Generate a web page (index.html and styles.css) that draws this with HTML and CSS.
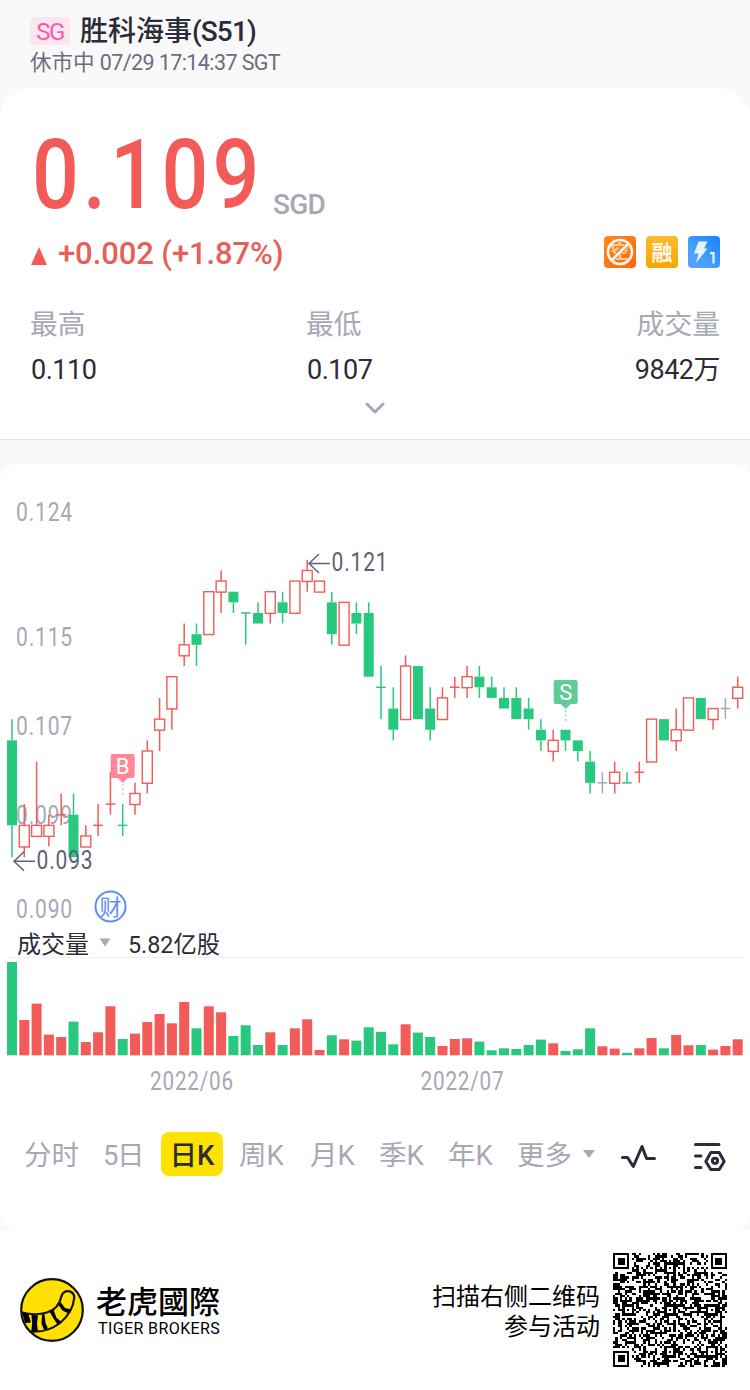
FILE: index.html
```html
<!DOCTYPE html>
<html lang="zh-CN">
<head>
	<meta charset="utf-8">
	<title>胜科海事(S51)</title>
	<link rel="stylesheet" href="styles.css">
</head>
<body>
	<header class="header">
		<div class="title"><span class="market">SG</span><h1>胜科海事<span>(S51)</span></h1></div>
		<p class="status">休市中 <span>07/29 17:14:37 SGT</span></p>
	</header>

	<section class="card quote">
		<div class="price"><strong>0.109</strong><span>SGD</span></div>
		<div class="change">
			<i class="up"></i>
			<span class="diff">+0.002 (+1.87%)</span>
			<div class="tags">
				<svg class="tag" viewBox="0 0 32 32">
					<defs>
						<linearGradient id="g1" x1="0" y1="0" x2="1" y2="1"><stop offset="0" stop-color="#ff8a1c"/><stop offset="1" stop-color="#ff6410"/></linearGradient>
						<linearGradient id="g2" x1="0" y1="0" x2="0" y2="1"><stop offset="0" stop-color="#fdbb30"/><stop offset="1" stop-color="#f7a500"/></linearGradient>
						<linearGradient id="g3" x1="0" y1="1" x2="1" y2="0"><stop offset="0" stop-color="#6b98ff"/><stop offset=".35" stop-color="#45a2fc"/><stop offset="1" stop-color="#1d80ff"/></linearGradient>
					</defs>
					<rect width="32" height="32" rx="4" fill="url(#g1)"/>
					<text x="16" y="23" class="tag-text" font-size="19" opacity=".65">空</text>
					<path d="M7.5 24.5L24.5 7.5" stroke="#ff7615" stroke-width="4"/>
					<circle cx="16" cy="16" r="12" fill="none" stroke="#fff8ed" stroke-width="2.6"/>
					<path d="M8 24L24 8" stroke="#fff8ed" stroke-width="2.6"/>
				</svg>
				<svg class="tag" viewBox="0 0 32 32">
					<rect width="32" height="32" rx="4" fill="url(#g2)"/>
					<text x="16" y="23.7" class="tag-text" font-size="21">融</text>
				</svg>
				<svg class="tag" viewBox="0 0 32 32">
					<rect width="32" height="32" rx="4" fill="url(#g3)"/>
					<path d="M10.5 5.5h9l-3.500 7h3.500L8 27l2.500-9.500H6z" fill="#e5f5ff"/>
					<path d="M22 17.200h3.500V27.500" fill="none" stroke="#e5f5ff" stroke-width="2.200"/>
				</svg>
			</div>
		</div>
		<ul class="stats">
			<li><label>最高</label><b>0.110</b></li>
			<li><label>最低</label><b>0.107</b></li>
			<li><label>成交量</label><b>9842万</b></li>
		</ul>
		<svg class="more" viewBox="0 0 20 12"><path d="M2 2l8 8 8-8"/></svg>
	</section>

	<section class="card kline">
		<svg id="chart" viewBox="0 464 750 640"></svg>
		<ul class="tabs">
			<li>分时</li>
			<li class="day5">5日</li>
			<li class="current">日K</li>
			<li>周K</li>
			<li>月K</li>
			<li>季K</li>
			<li>年K</li>
			<li>更多<i class="caret"></i></li>
			<li><svg class="icon" viewBox="0 0 36 32"><path d="M1.500 17.500h5l5.800 9L21 6.500l4.600 12H33.500"/></svg></li>
			<li><svg class="icon" viewBox="0 0 36 32"><path d="M2.500 4.500H26M2.500 16H8M2.500 27.500H8M17.800 12.500h8.400l5 9-5 8h-8.400l-5-8z"/><circle cx="22" cy="20.800" r="2.600"/></svg></li>
		</ul>
	</section>

	<footer class="footer">
		<svg class="logo" viewBox="0 0 64 64">
			<circle cx="32" cy="32" r="30.800" fill="#ffe000"/>
			<path class="line" d="M2 34.500Q15 38 27 34.500T41.500 18Q43.500 13 48 13.200 54.500 14 54.200 20 53 34 40 45 27 55 10.500 53.500"/>
			<path d="M2 34l6.500 2.500 2.500 8-6 .5zM11.500 37l6.500.3-1 8 .8 7.800-6.500.4.8-8zM22 36.500l2.500-.5 1 9 2.500 5.500-4 1.200-2.500-6zM29.500 33.500l4-2 2.800 8 5 4.500-3.500 3-4.300-6.500zM38.500 27l2-3 4.500 6 6 1.500-2.500 4-6-3z"/>
			<circle class="line" cx="32" cy="32" r="30.800"/>
		</svg>
		<div class="brand"><b>老虎國際</b><span>TIGER BROKERS</span></div>
		<p class="scan">扫描右侧二维码<br>参与活动</p>
		<svg id="qrcode" viewBox="0 0 49 49" shape-rendering="crispEdges"></svg>
	</footer>
	<script src="chart.js"></script>
</body>
</html>
```
FILE: styles.css
```css
*{
	margin:0;
	padding:0;
	box-sizing:border-box;
}
body{
	width:750px;
	height:1390px;
	background:#f9f9f9;
	color:#2b2c38;
	font-family:Roboto,"Noto Sans CJK SC",sans-serif;
	overflow:hidden;
}
ul{
	list-style:none;
}
.header{
	height:88px;
	padding:16px 30px 0;
}
.title{
	display:flex;
	align-items:center;
	height:30px;
}
.market{
	width:40px;
	height:28px;
	margin-right:10px;
	border-radius:4px;
	background:#fde6ef;
	color:#f75ca5;
	font-size:24px;
	line-height:30px;
	text-align:center;
	letter-spacing:-1.500px;
}
.title h1{
	font-size:28px;
	font-weight:500;
	line-height:30px;
	padding-top:2px;
}
.title h1 span{
	letter-spacing:-.9px;
}
.status{
	color:#6c6d80;
	font-size:21.500px;
	line-height:34px;
}
.status span{
	letter-spacing:-.6px;
}
.card{
	background:#fff;
}
.quote{
	height:352px;
	padding:38px 30px 0;
	border-bottom:1px solid #e8e8e8;
	border-radius:32px 32px 0 0;
}
.price{
	display:flex;
	height:96px;
}
.price strong{
	width:241px;
	margin-left:2px;
	color:#f25b57;
	font-size:97px;
	font-weight:500;
	line-height:98px;
	letter-spacing:5px;
	transform:scaleX(.85);
	transform-origin:left;
	white-space:nowrap;
}
.price span{
	padding-top:62px;
	color:#a6a8b5;
	font-size:28px;
	font-weight:500;
	line-height:34px;
	letter-spacing:-.8px;
}
.change{
	display:flex;
	align-items:center;
	height:60px;
	color:#e85e58;
	font-size:31px;
	font-weight:500;
}
.up{
	margin:8px 11px 0 1px;
	border:8px solid transparent;
	border-top:0;
	border-bottom:18px solid #f25b57;
}
.diff{
	padding-top:2px;
	letter-spacing:-.1px;
}
.tags{
	display:flex;
	gap:10px;
	margin-left:auto;
}
.tag{
	width:32px;
	height:32px;
}
.tag-text{
	fill:#fff8ed;
	font-family:"Noto Sans CJK SC",sans-serif;
	font-weight:700;
	text-anchor:middle;
}
.stats{
	display:grid;
	grid-template-columns:276px 1fr auto;
	margin-top:22px;
}
.stats li{
	display:flex;
	flex-direction:column;
}
.stats li:last-child{
	align-items:flex-end;
}
.stats label{
	color:#a6a8b5;
	font-size:27.800px;
	line-height:42px;
}
.stats b{
	padding-left:1px;
	font-size:27px;
	font-weight:400;
	line-height:49px;
	letter-spacing:-.5px;
}
.more{
	display:block;
	width:20px;
	height:12px;
	margin:7px auto 0;
	fill:none;
	stroke:#a6a8b5;
	stroke-width:3;
	stroke-linecap:round;
	stroke-linejoin:round;
}
.kline{
	height:766px;
	margin-top:24px;
	border-radius:16px;
}
#chart{
	display:block;
	width:750px;
	height:640px;
}
.axis{
	fill:#a6a8b5;
	font-size:25px;
	letter-spacing:1px;
}
.dark{
	fill:#2b2c38;
	font-size:24px;
}
.mark{
	fill:#5f6075;
	font-size:25px;
	letter-spacing:1px;
}
.pin{
	fill:#fff;
	font-size:22px;
	text-anchor:middle;
}
.cai{
	fill:#5b8df5;
	font-size:22px;
	text-anchor:middle;
}
.tabs{
	display:grid;
	grid-template-columns:79px 58px 78px 71px 69px 69px 69px 104px 72px 40px;
	height:44px;
	margin-top:28px;
	padding-left:24px;
	color:#a6a8b5;
	font-size:27.500px;
	line-height:40px;
}
.tabs li{
	display:flex;
	align-items:center;
	height:44px;
	padding-top:3px;
}
.tabs .day5{
	letter-spacing:-1.500px;
}
.tabs .current{
	justify-content:center;
	width:62px;
	border-radius:8px;
	background:#ffe200;
	color:#2b2c38;
	font-weight:500;
}
.caret{
	margin:-4px 0 0 11px;
	border:6px solid transparent;
	border-top:8px solid #a6a8b5;
	border-bottom:0;
}
.icon{
	width:36px;
	height:32px;
	fill:none;
	stroke:#2b2c38;
	stroke-width:3;
	stroke-linecap:round;
	stroke-linejoin:round;
}
.footer{
	display:flex;
	align-items:center;
	height:160px;
	padding:0 23px 0 20px;
	background:#fff;
	color:#000;
}
.logo{
	width:64px;
	height:64px;
}
.logo .line{
	fill:none;
	stroke:#111;
	stroke-width:2.200;
}
.brand{
	margin-left:12px;
}
.brand b,
.brand span{
	display:block;
}
.brand b{
	font-family:"Noto Sans CJK TC",sans-serif;
	font-size:31px;
	font-weight:500;
	line-height:36px;
}
.brand span{
	margin-left:2px;
	font-size:16px;
	line-height:21px;
	letter-spacing:.4px;
}
.scan{
	margin-left:auto;
	padding-top:4px;
	font-size:24px;
	line-height:30px;
	text-align:right;
}
#qrcode{
	width:114px;
	height:114px;
	margin-left:13px;
}
```
FILE: chart.js
```js
var RED='#f25b57',GREEN='#29c87f',GRAY='#a6a8b5';
var colors={r:RED,g:GREEN,n:GRAY};
//[颜色,最高,实体上沿,实体下沿,最低,成交量]  价格为距0.093的档数
var data=[
	['g',13,11,3,0,93.3],['r',5,3,1,0,35.3],['r',9,3,2,2,51.7],['r',4,3,2,1,20.7],['r',6,4,4,3,18.3],
	['g',6,4,0,0,33.7],['r',3,2,1,1,13.3],['r',5,3,3,2,23],['r',8,5,5,4,49],['g',5,3,3,2,16.3],
	['r',7,6,5,4,21.7],['r',11,10,7,6,33.3],['r',15,13,12,10,41.3],['r',17,17,14,12,32],['r',22,20,19,18,53.3],
	['g',22,21,20,18,27],['r',25,25,21,21,49],['r',27,26,25,23,43],['g',25,25,24,23,19.3],['g',23,23,23,20,30],
	['g',24,23,22,22,10.3],['r',25,25,23,22,23],['g',25,24,23,22,10.3],['r',26,26,23,23,27],['r',28,27,26,25,36],
	['r',26,26,25,25,5.3],['g',25,24,21,20,20],['r',24,24,20,20,16],['g',24,23,22,21,14.7],['g',24,23,17,17,28],
	['g',18,16,16,13,23.5],['g',16,14,12,11,11],['r',19,18,13,13,31],['g',18,18,13,13,22.7],['g',16,14,12,11,18.3],
	['r',16,15,13,13,9.3],['r',17,16,16,15,16.3],['r',18,17,16,15,17],['g',18,17,16,15,13.7],['g',17,16,15,15,5],
	['g',16,15,14,14,7],['g',16,15,13,13,6.3],['g',15,14,13,12,10.3],['g',13,12,11,10,15.7],['r',12,11,10,9,12],
	['g',12,12,11,10,4.3],['g',11,11,10,9,6],['g',10,9,7,6,27],['n',8,7,7,6,9],['r',9,8,7,6,6.7],
	['g',8,7,7,7,2.5],['r',9,8,8,7,7],['r',13,13,9,9,17.3],['g',13,13,11,11,7],['r',14,12,11,10,20.3],
	['r',15,15,12,12,10],['g',15,15,13,13,10.3],['r',14,14,13,12,5.7],['n',15,14,14,13,9.3],['r',17,16,15,14,16]
];
function y(k){
	return 857.2-10.62*k;
}
function line(x1,y1,x2,y2,c,w){
	return '<line x1="'+x1+'" y1="'+y1+'" x2="'+x2+'" y2="'+y2+'" stroke="'+c+'" stroke-width="'+(w||1.5)+'"/>';
}
function text(x,y,s,cls,w){
	return '<text x="'+x+'" y="'+y+'" class="'+cls+'"'+(w?' textLength="'+w+'" lengthAdjust="spacingAndGlyphs"':'')+'>'+s+'</text>';
}
var html='';
//坐标
[['0.124',520.5],['0.115',645.5],['0.107',734.5],['0.099',823.5],['0.090',918]].forEach(function(a){
	html+=text(16,a[1],a[0],'axis',57);
});
html+=line(7,957.5,744,957.5,'#f0f0f0',1);
//蜡烛和成交量
data.forEach(function(d,i){
	var x=12+12.3*i,c=colors[d[0]];
	if(d[1]>d[2]) html+=line(x,y(d[1]),x,y(d[2]),c);
	if(d[4]<d[3]) html+=line(x,y(d[3]),x,y(d[4]),c);
	if(d[2]==d[3]){
		html+=line(x-4.8,y(d[2]),x+4.8,y(d[2]),c,1.5);
	}else if(d[0]=='r'){
		html+='<rect x="'+(x-5)+'" y="'+y(d[2])+'" width="10" height="'+(y(d[3])-y(d[2])+.4)+'" fill="none" stroke="'+c+'" stroke-width="1.4"/>';
	}else{
		html+='<rect x="'+(x-5)+'" y="'+y(d[2])+'" width="10" height="'+(y(d[3])-y(d[2]))+'" fill="'+c+'"/>';
	}
	html+='<rect x="'+(x-5)+'" y="'+(1055.3-d[5])+'" width="10" height="'+d[5]+'" fill="'+(d[0]=='g'?GREEN:RED)+'"/>';
});
//最高最低标注
function arrow(x,y){
	return '<path d="M'+(x+10)+' '+(y-9.5)+'L'+x+' '+y+'l10 9.500M'+x+' '+y+'h21" fill="none" stroke="#5f6075" stroke-width="1.500"/>';
}
html+=arrow(309,563.5)+text(331.5,570.5,'0.121','mark',57);
html+=arrow(14,861.3)+text(36.5,868.5,'0.093','mark',57);
//买卖点
function pin(x,y,s,c){
	return '<path d="M'+(x-10)+' '+y+'h20q2 0 2 2v20q0 2-2 2h-5l-5 5-5-5h-5q-2 0-2-2v-20q0-2 2-2z" fill="'+c+'"/>'
		+'<path d="M'+x+' '+(y+30)+'v12" stroke="'+c+'" stroke-width="1.500" stroke-dasharray="2 2.500" opacity=".6"/>'
		+text(x,y+19.8,s,'pin');
}
html+=pin(122.7,754,'B','#ff8797')+pin(565.7,680,'S','#61cb96');
html+='<circle cx="110.500" cy="906.500" r="15" fill="#fff" stroke="#5b8df5" stroke-width="2"/>'+text(110.5,914.5,'财','cai');
html+=text(17,952.5,'成交量','dark',72)+'<path d="M99.500 938.500h11l-5.500 8z" fill="#a6a8b5"/>';
html+=text(128,952.5,'5.82亿股','dark',92);
html+=text(150,1089.5,'2022/06','axis',84)+text(420.5,1089.5,'2022/07','axis',84);
document.getElementById('chart').innerHTML=html;

//二维码
var n=49,seed=51,qr='';
function rand(){
	seed=(seed*1103515245+12345)%2147483648;
	return seed/2147483648;
}
//定位图形，r为半径
function ring(cx,cy,r,px,py){
	var d=Math.max(Math.abs(px-cx),Math.abs(py-cy));
	if(d>r) return -1;
	return r==2 ? (d!=1?1:0) : (d==3||d<2?1:0);
}
for(var r=0;r<n;r++){
	for(var c=0;c<n;c++){
		var v=rand()>.5?1:0;
		if(r==6||c==6) v=(r+c)%2?0:1;
		[[6,24],[24,6],[24,24],[24,42],[42,24],[42,42]].forEach(function(p){
			var k=ring(p[0],p[1],2,c,r);
			if(k>-1) v=k;
		});
		if((r<8&&c<8)||(r<8&&c>n-9)||(r>n-9&&c<8)) v=0;
		[[3,3],[n-4,3],[3,n-4]].forEach(function(p){
			var k=ring(p[0],p[1],3,c,r);
			if(k>-1) v=k;
		});
		if(v) qr+='M'+c+' '+r+'h1v1h-1z';
	}
}
document.getElementById('qrcode').innerHTML='<path d="'+qr+'"/>';
```
